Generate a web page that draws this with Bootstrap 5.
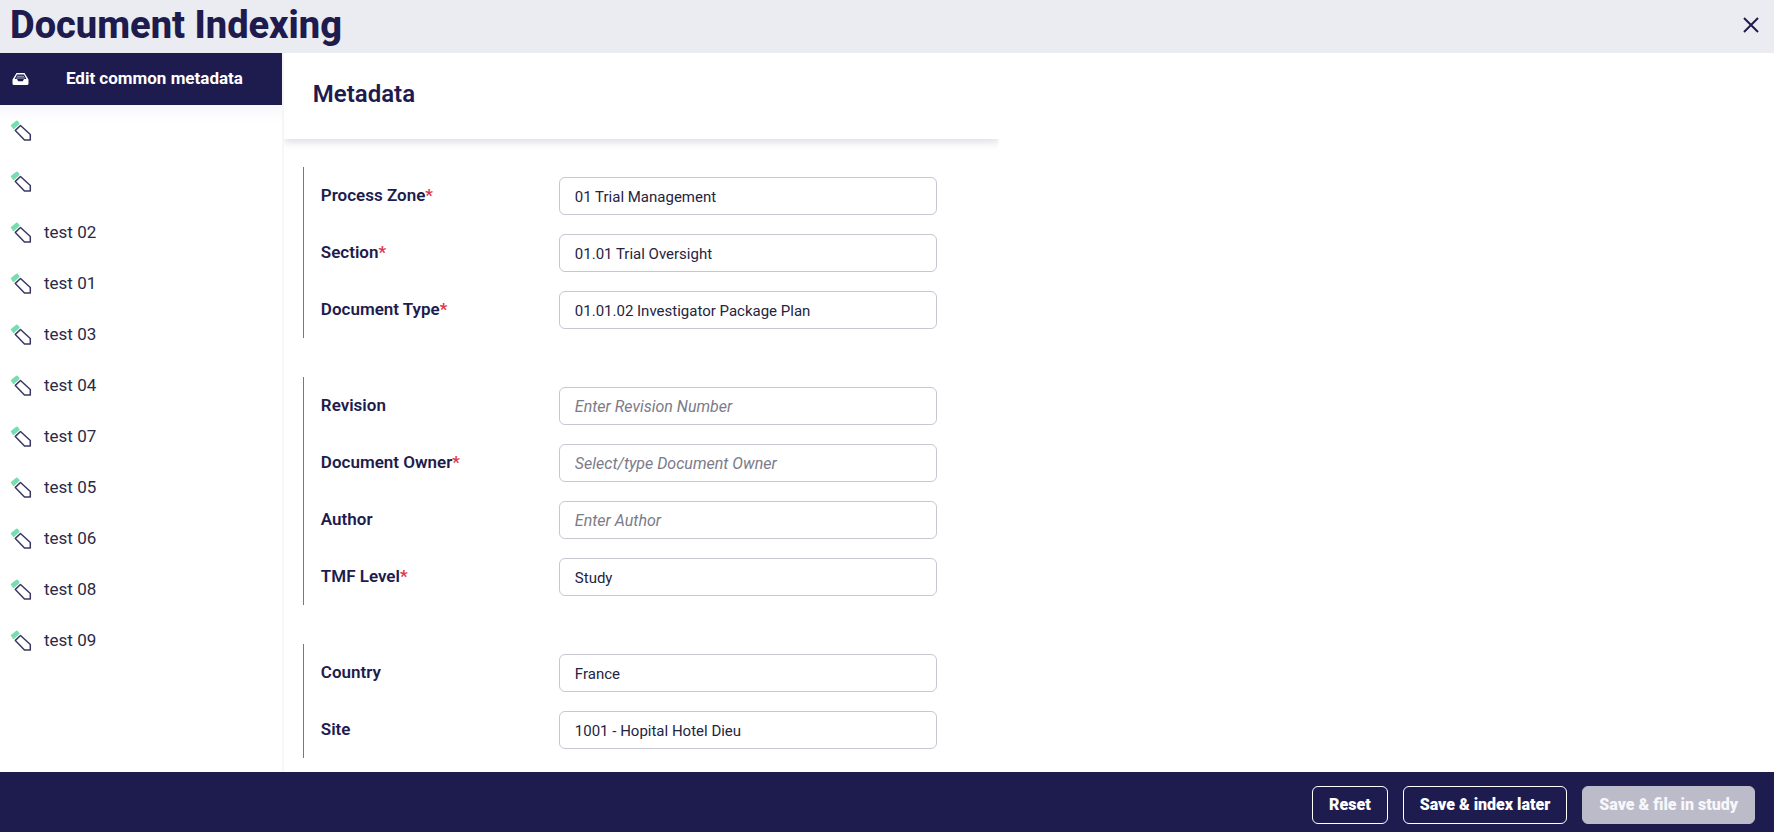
<!DOCTYPE html>
<html lang="en">
<head>
<meta charset="utf-8">
<meta name="viewport" content="width=device-width, initial-scale=1">
<title>Document Indexing</title>
<link href="https://cdn.jsdelivr.net/npm/bootstrap@5.3.0/dist/css/bootstrap.min.css" rel="stylesheet">
<style>
  :root { --navy: #1e1c4e; }
  body { font-family: Roboto, "Liberation Sans", sans-serif; color: var(--navy); background: #fff; font-size: 17px; }
  .top-bar { background: #ebecf1; height: 53px; padding: 0 15px 3px 10px; }
  .top-bar h1 { font-size: 38px; line-height: 50px; font-weight: 800; }
  .close-btn { color: var(--navy); line-height: 0; padding: 0; }
  .side-pane { flex: 0 0 16%; border-right: 2px solid #f7f7f9; }
  .common-btn { background: var(--navy); color: #fff; height: 52px; width: 100%; font-size: 17px; font-weight: 700; padding: 0 12px; line-height: 24px; gap: 10px; }
  .common-btn span { padding-bottom: 2px; }
  .common-btn:hover { background: #2c2a66; color: #fff; }
  .doc-list { background: linear-gradient(#f8f8fd, #fff 18px); }
  .doc-list a { height: 51px; padding: 0 10px; gap: 12px; color: #2b2a45; line-height: 24px; }
  .doc-list a span { padding-bottom: 1px; }
  .meta-pane { flex: 0 0 40.3%; }
  .meta-head { height: 86px; padding: 28px 29px; box-shadow: 0 3px 8px rgba(30, 28, 78, .16); clip-path: inset(0 0 -16px 0); }
  .meta-head h2 { font-size: 24px; line-height: 26px; font-weight: 600; }
  .meta-form { padding: 28px 62px 13px 19px; gap: 39px; }
  .field-set { border-left: 1px solid #77768c; padding-left: 17px; }
  .field-row { height: 57px; display: grid; grid-template-columns: 238px 1fr; align-items: center; }
  .field-row label { font-weight: 600; line-height: 24px; padding-bottom: 2px; }
  .field-row label span { color: #dc3545; }
  .field-row .form-control { height: 38px; font-size: 15px; line-height: 22px; padding: 8px 15px 6px; color: #25243f; border-color: #c7c6d2; border-radius: 6px; }
  .field-row .form-control:placeholder-shown { font-size: 16px; }
  .field-row .form-control::placeholder { color: #7b7b89; font-style: italic; opacity: 1; }
  .action-bar { background: var(--navy); height: 60px; padding: 6px 19px 0; gap: 15px; }
  .action-bar .btn { height: 38px; padding: 0 16px; font-size: 16px; line-height: 22px; font-weight: 900; color: #fff; border: 1px solid #fff; border-radius: 6px; }
  .action-bar .btn:disabled { background: #bcbbc9; border-color: #bcbbc9; color: #f7f7fa; opacity: 1; }
</style>
</head>
<body>
<svg class="d-none" aria-hidden="true">
  <symbol id="marker" viewBox="0 0 22 22">
    <path d="M1.800 5.500 6.800 1.500 8.600 3.500 3.600 8Z" fill="#78ddb0" stroke="#78ddb0" stroke-width="2" stroke-linejoin="round"/>
    <path d="M10.500 5.500 20.300 14.500V20H14.500L5.300 10.400Z" fill="#fff" stroke="#3a3861" stroke-width="1.500" stroke-linejoin="round"/>
  </symbol>
</svg>
<div class="d-flex flex-column min-vh-100">
  <header class="top-bar d-flex justify-content-between">
    <h1 class="mb-0">Document Indexing</h1>
    <button class="btn close-btn border-0" type="button" aria-label="Close">
      <svg width="16" height="16" viewBox="0 0 16 16"><path d="M1 1 15 15M15 1 1 15" stroke="currentColor" stroke-width="2"/></svg>
    </button>
  </header>
  <div class="d-flex flex-grow-1">
    <nav class="side-pane" aria-label="Documents">
      <button class="btn common-btn rounded-0 border-0 d-flex align-items-center" type="button">
        <svg width="17" height="14" viewBox="0 0 17 14"><path fill="#fff" fill-rule="evenodd" d="M4.500 1H12.500L16.500 7.500V11.500Q16.500 13 15 13H2Q.5 13 .5 11.500V7.500ZM5 2.600 2.600 7H5L6.200 9.200H10.800L12 7H14.400L12 2.600Z"/><path d="M5 4.300H12M4.200 6H12.800" stroke="#aaa9c2"/></svg>
        <span class="flex-grow-1">Edit common metadata</span>
      </button>
      <div class="doc-list" id="docs"></div>
    </nav>
    <main class="meta-pane">
      <div class="meta-head"><h2 class="mb-0">Metadata</h2></div>
      <form class="meta-form d-flex flex-column">
        <div class="field-set">
          <div class="field-row"><label for="zone">Process Zone<span>*</span></label><input class="form-control" id="zone" value="01 Trial Management"></div>
          <div class="field-row"><label for="section">Section<span>*</span></label><input class="form-control" id="section" value="01.01 Trial Oversight"></div>
          <div class="field-row"><label for="type">Document Type<span>*</span></label><input class="form-control" id="type" value="01.01.02 Investigator Package Plan"></div>
        </div>
        <div class="field-set">
          <div class="field-row"><label for="revision">Revision</label><input class="form-control" id="revision" placeholder="Enter Revision Number"></div>
          <div class="field-row"><label for="owner">Document Owner<span>*</span></label><input class="form-control" id="owner" placeholder="Select/type Document Owner"></div>
          <div class="field-row"><label for="author">Author</label><input class="form-control" id="author" placeholder="Enter Author"></div>
          <div class="field-row"><label for="level">TMF Level<span>*</span></label><input class="form-control" id="level" value="Study"></div>
        </div>
        <div class="field-set">
          <div class="field-row"><label for="country">Country</label><input class="form-control" id="country" value="France"></div>
          <div class="field-row"><label for="site">Site</label><input class="form-control" id="site" value="1001 - Hopital Hotel Dieu"></div>
        </div>
      </form>
    </main>
  </div>
  <footer class="action-bar d-flex align-items-center justify-content-end">
    <button class="btn" type="button">Reset</button>
    <button class="btn" type="button">Save &amp; index later</button>
    <button class="btn" type="button" disabled>Save &amp; file in study</button>
  </footer>
</div>
<script src="https://cdn.jsdelivr.net/npm/bootstrap@5.3.0/dist/js/bootstrap.bundle.min.js"></script>
<script>
  const names = ["", "", "test 02", "test 01", "test 03", "test 04", "test 07", "test 05", "test 06", "test 08", "test 09"];
  document.getElementById("docs").innerHTML = names.map(name =>
    `<a href="#" class="d-flex align-items-center text-decoration-none" aria-label="${name || "Untitled document"}"><svg width="22" height="22"><use href="#marker"/></svg><span>${name}</span></a>`
  ).join("");
</script>
</body>
</html>
